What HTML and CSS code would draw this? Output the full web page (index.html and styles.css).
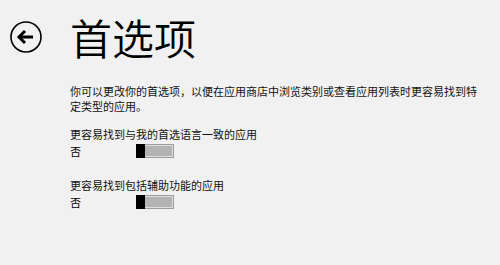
FILE: index.html
```html
<!DOCTYPE html>
<html lang="zh-CN">
<head>
    <meta charset="UTF-8">
    <meta name="viewport" content="width=device-width, initial-scale=1.0">
    <title>首选项</title>
    <link rel="stylesheet" href="styles.css">
</head>
<body>
    <header class="header">
        <button class="back-button" aria-label="返回">
            <svg width="32" height="32" viewBox="0 0 32 32">
                <circle cx="16" cy="16" r="15" fill="none" stroke="#000" stroke-width="1.6"/>
                <path d="M9 16 H23" stroke="#000" stroke-width="3" fill="none"/>
                <path d="M15 10 L9 16 L15 22" stroke="#000" stroke-width="3" fill="none" stroke-linejoin="miter"/>
            </svg>
        </button>
        <h1 class="title">首选项</h1>
    </header>

    <main class="content">
        <p class="intro">你可以更改你的首选项，以便在应用商店中浏览类别或查看应用列表时更容易找到特定类型的应用。</p>

        <div class="setting">
            <div class="setting-label">更容易找到与我的首选语言一致的应用</div>
            <div class="setting-row">
                <span class="state">否</span>
                <span class="toggle"><span class="thumb"></span></span>
            </div>
        </div>

        <div class="setting">
            <div class="setting-label">更容易找到包括辅助功能的应用</div>
            <div class="setting-row">
                <span class="state">否</span>
                <span class="toggle"><span class="thumb"></span></span>
            </div>
        </div>
    </main>
</body>
</html>
```

FILE: styles.css
```css
* {
    margin: 0;
    padding: 0;
    box-sizing: border-box;
}

body {
    background-color: #f1f1f1;
    color: #000;
    font-family: "Noto Sans CJK SC", "Noto Sans", sans-serif;
    width: 500px;
    height: 265px;
    overflow: hidden;
}

.header {
    display: flex;
    align-items: center;
    height: 74px;
    padding-left: 10px;
}

.back-button {
    width: 32px;
    height: 32px;
    border: none;
    background: none;
    margin-right: 28px;
    display: flex;
}

.title {
    font-size: 42px;
    font-weight: 350;
    line-height: 48px;
}

.content {
    padding-left: 70px;
    padding-top: 10px;
}

.intro {
    font-size: 11px;
    line-height: 15px;
    width: 415px;
    color: #111;
}

.setting {
    margin-top: 12px;
}

.setting + .setting {
    margin-top: 17px;
}

.setting-label {
    font-size: 11px;
    line-height: 16px;
    color: #111;
}

.setting-row {
    display: flex;
    align-items: center;
    height: 18px;
    font-size: 11px;
}

.state {
    width: 66px;
}

.toggle {
    width: 38px;
    height: 14px;
    background: #b3b3b3;
    border: 1px solid #9c9c9c;
    box-shadow: inset 0 0 0 1px #dedede;
    display: flex;
}

.thumb {
    width: 9px;
    height: 14px;
    margin: -1px 0 0 -1px;
    background: #000;
}
```
